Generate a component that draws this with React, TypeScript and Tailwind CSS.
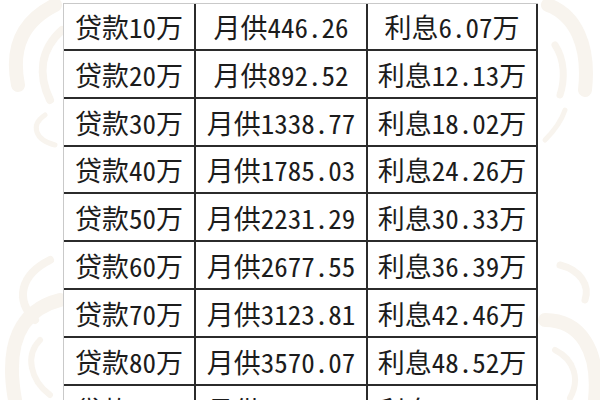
import React from 'react';

const rows = [
  { loan: '贷款10万', monthly: '月供446.26', interest: '利息6.07万', h: 'h-[47px]' },
  { loan: '贷款20万', monthly: '月供892.52', interest: '利息12.13万', h: 'h-[48px]' },
  { loan: '贷款30万', monthly: '月供1338.77', interest: '利息18.02万', h: 'h-[48px]' },
  { loan: '贷款40万', monthly: '月供1785.03', interest: '利息24.26万', h: 'h-[47px]' },
  { loan: '贷款50万', monthly: '月供2231.29', interest: '利息30.33万', h: 'h-[48px]' },
  { loan: '贷款60万', monthly: '月供2677.55', interest: '利息36.39万', h: 'h-[48px]' },
  { loan: '贷款70万', monthly: '月供3123.81', interest: '利息42.46万', h: 'h-[48px]' },
  { loan: '贷款80万', monthly: '月供3570.07', interest: '利息48.52万', h: 'h-[48px]' },
  { loan: '贷款90万', monthly: '月供4016.33', interest: '利息54.59万', h: 'h-[48px]' },
];

// faint paper decoration behind the table
function Swirls() {
  return (
    <svg
      className="absolute inset-0 pointer-events-none"
      width="600"
      height="400"
      viewBox="0 0 600 400"
    >
      <g fill="none" stroke="#f8f4ee" strokeLinecap="round">
        <path d="M55 5 C25 20 10 45 18 85" strokeWidth="14" />
        <path d="M62 30 C40 50 38 75 50 100" strokeWidth="8" />
        <path d="M45 115 C30 125 35 140 55 145" strokeWidth="5" />
        <path d="M50 260 C20 275 15 300 35 320" strokeWidth="8" />
        <path d="M60 300 C20 310 5 345 15 400" strokeWidth="14" />
        <path d="M40 340 C25 355 30 380 50 395" strokeWidth="6" />
        <path d="M548 5 C575 15 590 45 585 90" strokeWidth="14" />
        <path d="M555 45 C565 60 565 80 560 95" strokeWidth="7" />
        <path d="M565 110 C560 125 550 135 545 140" strokeWidth="5" />
        <path d="M560 265 C580 270 590 285 585 300" strokeWidth="7" />
        <path d="M545 320 C580 320 600 350 595 400" strokeWidth="14" />
        <path d="M555 350 C575 360 580 380 570 398" strokeWidth="6" />
      </g>
    </svg>
  );
}

export default function App() {
  return (
    <div className="relative w-[600px] h-[400px] overflow-hidden bg-white">
      <Swirls />
      <div
        className="relative ml-[63px] mt-[3px] w-[475px] border-l border-t border-[#c9c9c9] bg-white text-[27px] leading-none text-[#1c1c1c] [font-feature-settings:'hwid']"
        style={{ fontFamily: '"Noto Sans CJK SC", "Noto Sans CJK JP", sans-serif' }}
      >
        {rows.map((row) => (
          <div
            key={row.loan}
            className={`flex ${row.h} border-b-2 border-[#2b2b2b]`}
          >
            <div className="flex w-[132px] items-center justify-center border-r-2 border-[#2b2b2b]">
              {row.loan}
            </div>
            <div className="flex w-[172px] items-center justify-center border-r-2 border-[#2b2b2b]">
              {row.monthly}
            </div>
            <div className="flex w-[170px] items-center justify-center border-r-2 border-[#2b2b2b]">
              {row.interest}
            </div>
          </div>
        ))}
      </div>
    </div>
  );
}
